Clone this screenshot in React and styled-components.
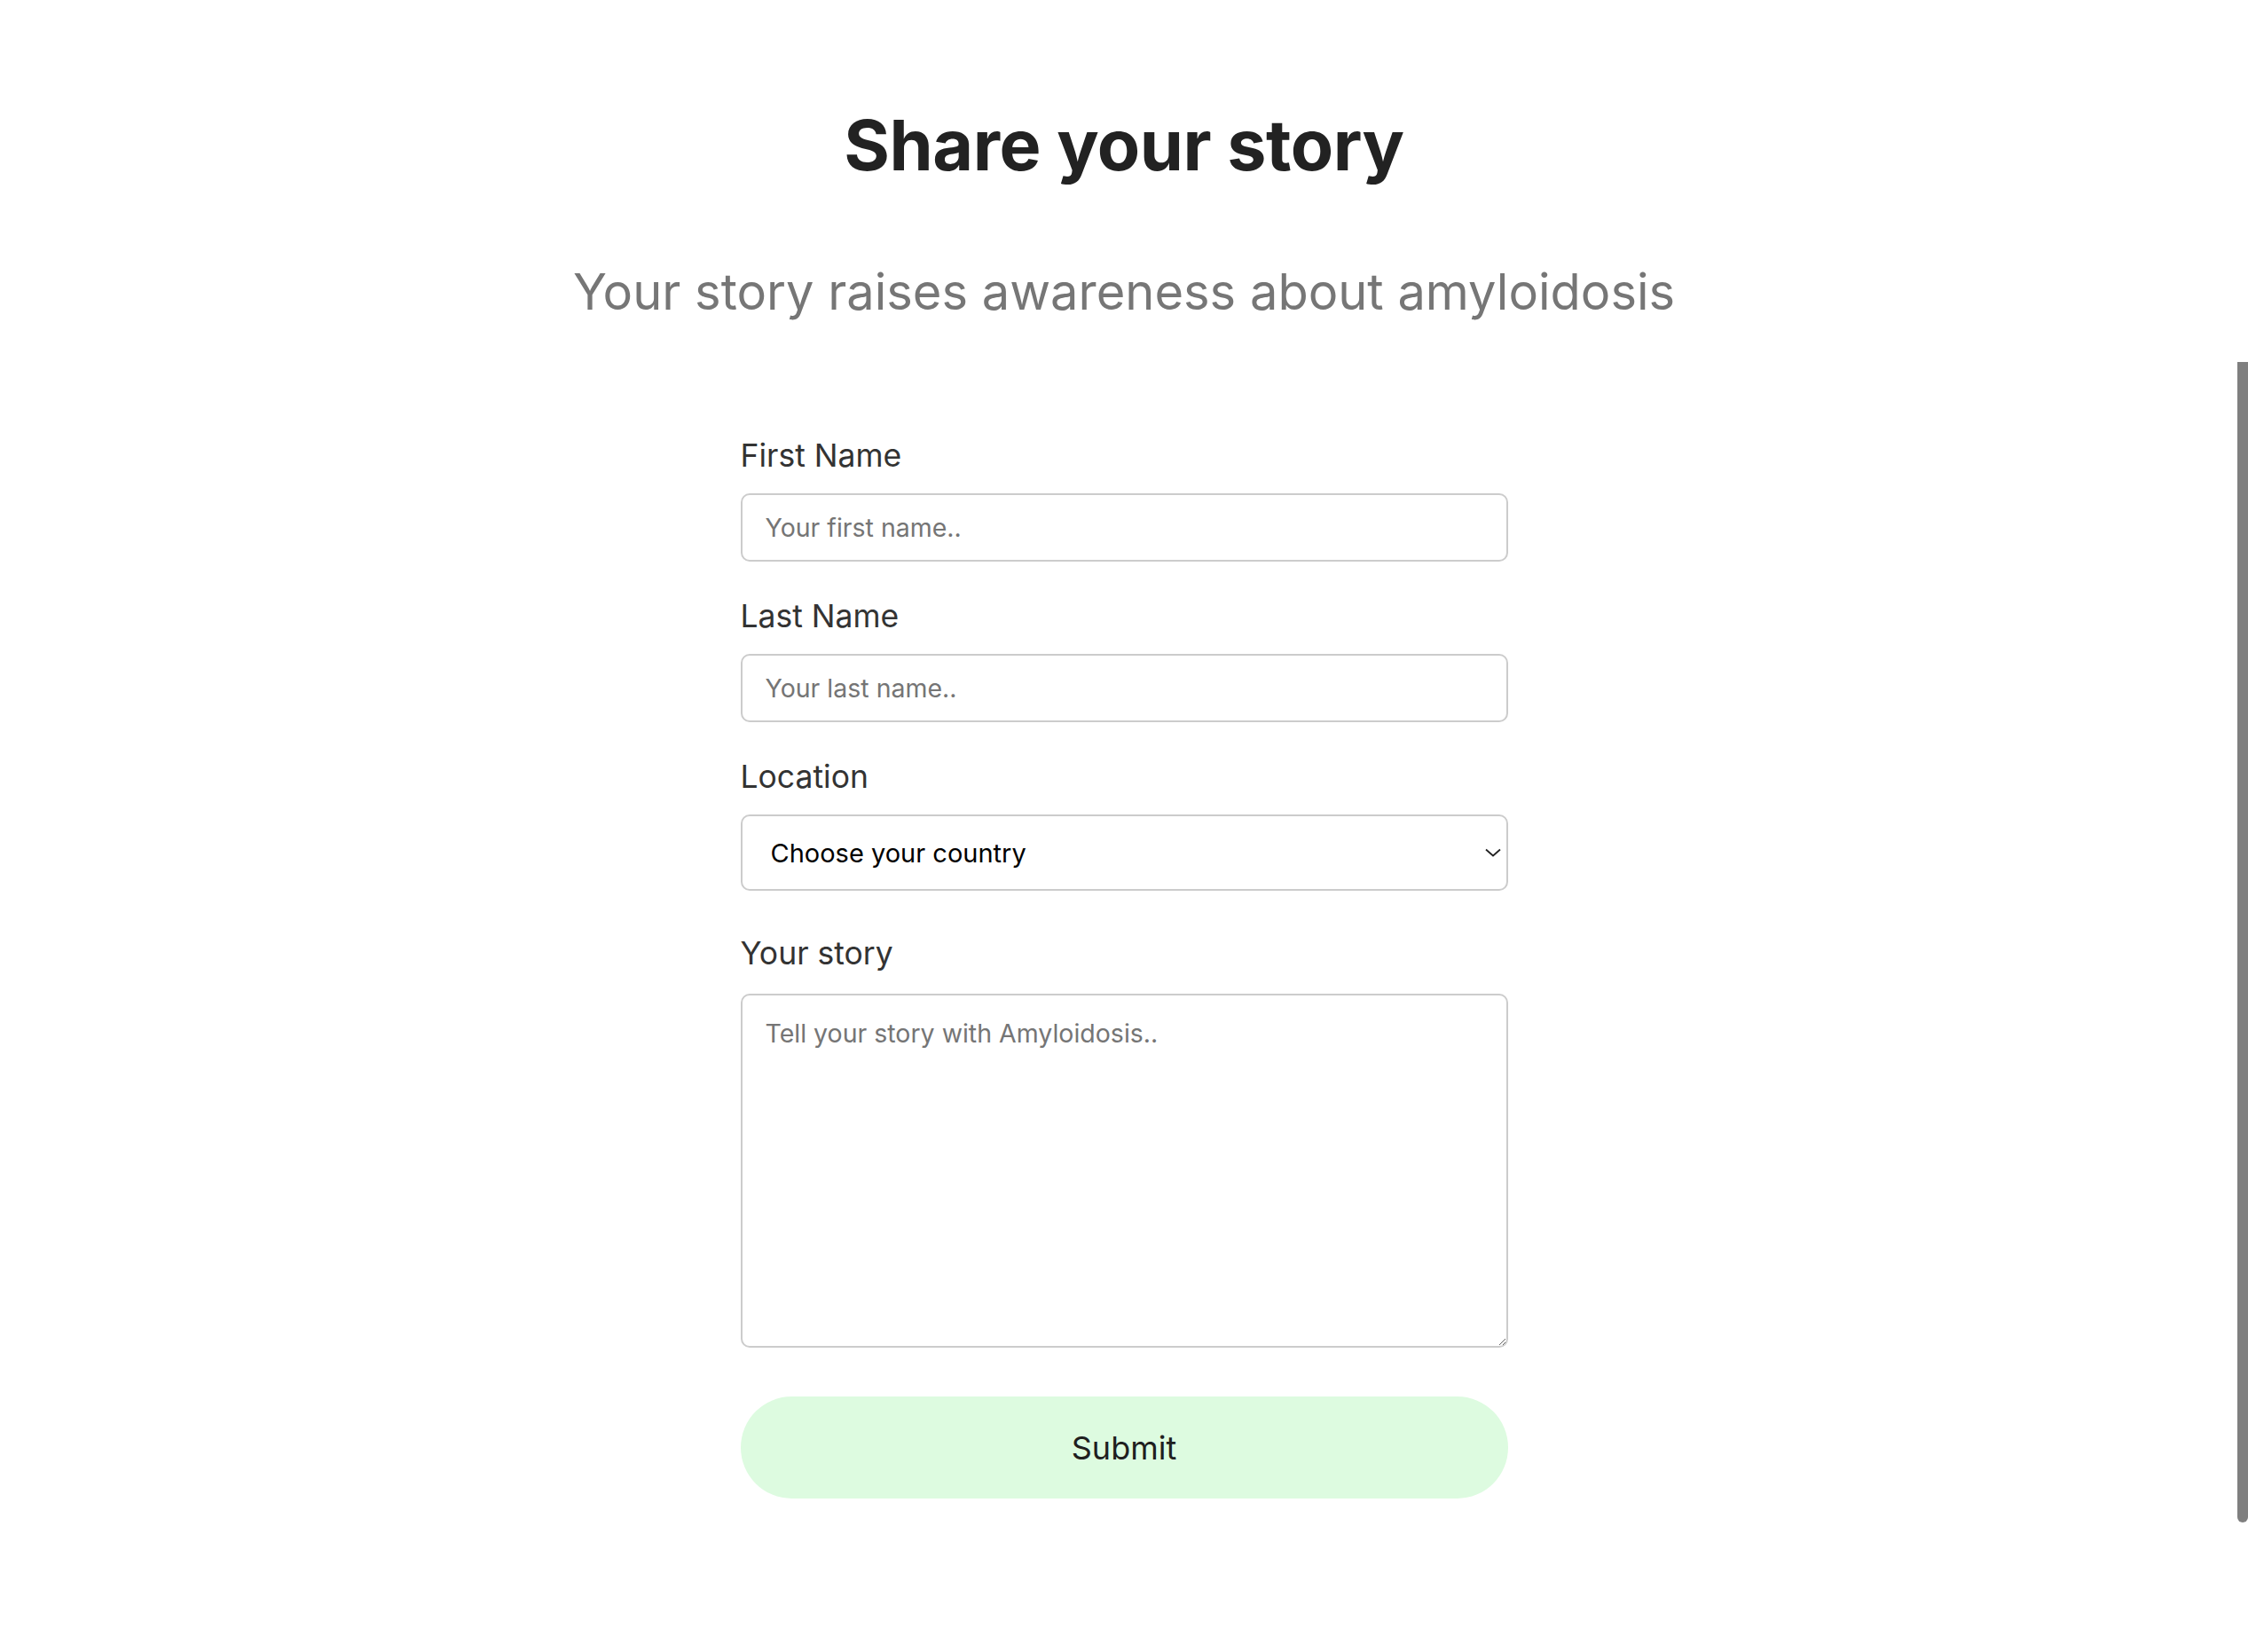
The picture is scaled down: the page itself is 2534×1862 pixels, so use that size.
import styled, { createGlobalStyle } from "styled-components";

const GlobalStyle = createGlobalStyle`
  html, body {
    margin: 0;
    padding: 0;
    background: #ffffff;
  }
  body {
    font-family: Inter, "Noto Sans", sans-serif;
  }
`;

const Page = styled.div`
  display: flex;
  flex-direction: column;
  align-items: center;
  min-height: 1862px;
  box-sizing: border-box;
  padding-top: 111px;
`;

const Title = styled.h1`
  font-family: Inter, sans-serif;
  font-size: 79px;
  font-weight: 700;
  letter-spacing: -0.5px;
  line-height: 104px;
  color: #222222;
  margin: 0;
`;

const Subtitle = styled.p`
  font-family: Inter, sans-serif;
  font-size: 56px;
  font-weight: 400;
  line-height: 70px;
  color: #767676;
  margin: 79px 0 0;
`;

const Form = styled.form`
  width: 865px;
  display: flex;
  flex-direction: column;
  margin-top: 130px;
`;

const Field = styled.div`
  display: flex;
  flex-direction: column;
  gap: ${(p) => p.$gap || 22}px;
  margin-bottom: ${(p) => p.$space || 42}px;
`;

const Label = styled.label`
  font-family: Inter, sans-serif;
  font-size: 35.5px;
  line-height: 40px;
  color: #333333;
`;

const Input = styled.input`
  box-sizing: border-box;
  width: 100%;
  height: 77px;
  border: 2px solid #cccccc;
  border-radius: 10px;
  padding: 0 26px;
  font-family: Inter, sans-serif;
  font-size: 28.5px;
  color: #222;
  outline: none;
  &::placeholder {
    color: #757575;
  }
`;

const SelectWrap = styled.div`
  position: relative;
`;

const Select = styled.select`
  box-sizing: border-box;
  width: 100%;
  height: 86px;
  appearance: none;
  background: #ffffff;
  border: 2px solid #cccccc;
  border-radius: 10px;
  padding: 0 32px;
  font-family: Inter, sans-serif;
  font-size: 29px;
  color: #000000;
  outline: none;
`;

const Chevron = styled.svg`
  position: absolute;
  right: 8px;
  top: 38px;
  pointer-events: none;
`;

const TextArea = styled.textarea`
  box-sizing: border-box;
  width: 100%;
  height: 399px;
  border: 2px solid #cccccc;
  border-radius: 10px;
  padding: 26px 26px;
  font-family: Inter, sans-serif;
  font-size: 28.5px;
  line-height: 34px;
  color: #222;
  outline: none;
  resize: vertical;
  display: block;
  &::placeholder {
    color: #757575;
  }
`;

const Submit = styled.button`
  height: 115px;
  width: 100%;
  border: none;
  border-radius: 58px;
  background: #ddfbe0;
  font-family: Inter, sans-serif;
  font-size: 36px;
  color: #1f1f1f;
  cursor: pointer;
`;

const ScrollThumb = styled.div`
  position: fixed;
  right: 0;
  top: 408px;
  width: 12px;
  height: 1308px;
  background: #7f7f7f;
  border-radius: 0 0 6px 6px;
`;

export default function App() {
  return (
    <>
      <GlobalStyle />
      <Page>
        <Title>Share your story</Title>
        <Subtitle>Your story raises awareness about amyloidosis</Subtitle>
        <Form onSubmit={(e) => e.preventDefault()}>
          <Field>
            <Label htmlFor="first">First Name</Label>
            <Input id="first" placeholder="Your first name.." />
          </Field>
          <Field>
            <Label htmlFor="last">Last Name</Label>
            <Input id="last" placeholder="Your last name.." />
          </Field>
          <Field $space={51}>
            <Label htmlFor="country">Location</Label>
            <SelectWrap>
              <Select id="country" defaultValue="">
                <option value="">Choose your country</option>
              </Select>
              <Chevron width="18" height="10" viewBox="0 0 18 10">
                <path d="M1 1.5 L9 8.5 L17 1.5" fill="none" stroke="#222" strokeWidth="1.8" />
              </Chevron>
            </SelectWrap>
          </Field>
          <Field $gap={25} $space={55}>
            <Label htmlFor="story">Your story</Label>
            <TextArea id="story" placeholder="Tell your story with Amyloidosis.." />
          </Field>
          <Submit type="submit">Submit</Submit>
        </Form>
      </Page>
      <ScrollThumb />
    </>
  );
}
